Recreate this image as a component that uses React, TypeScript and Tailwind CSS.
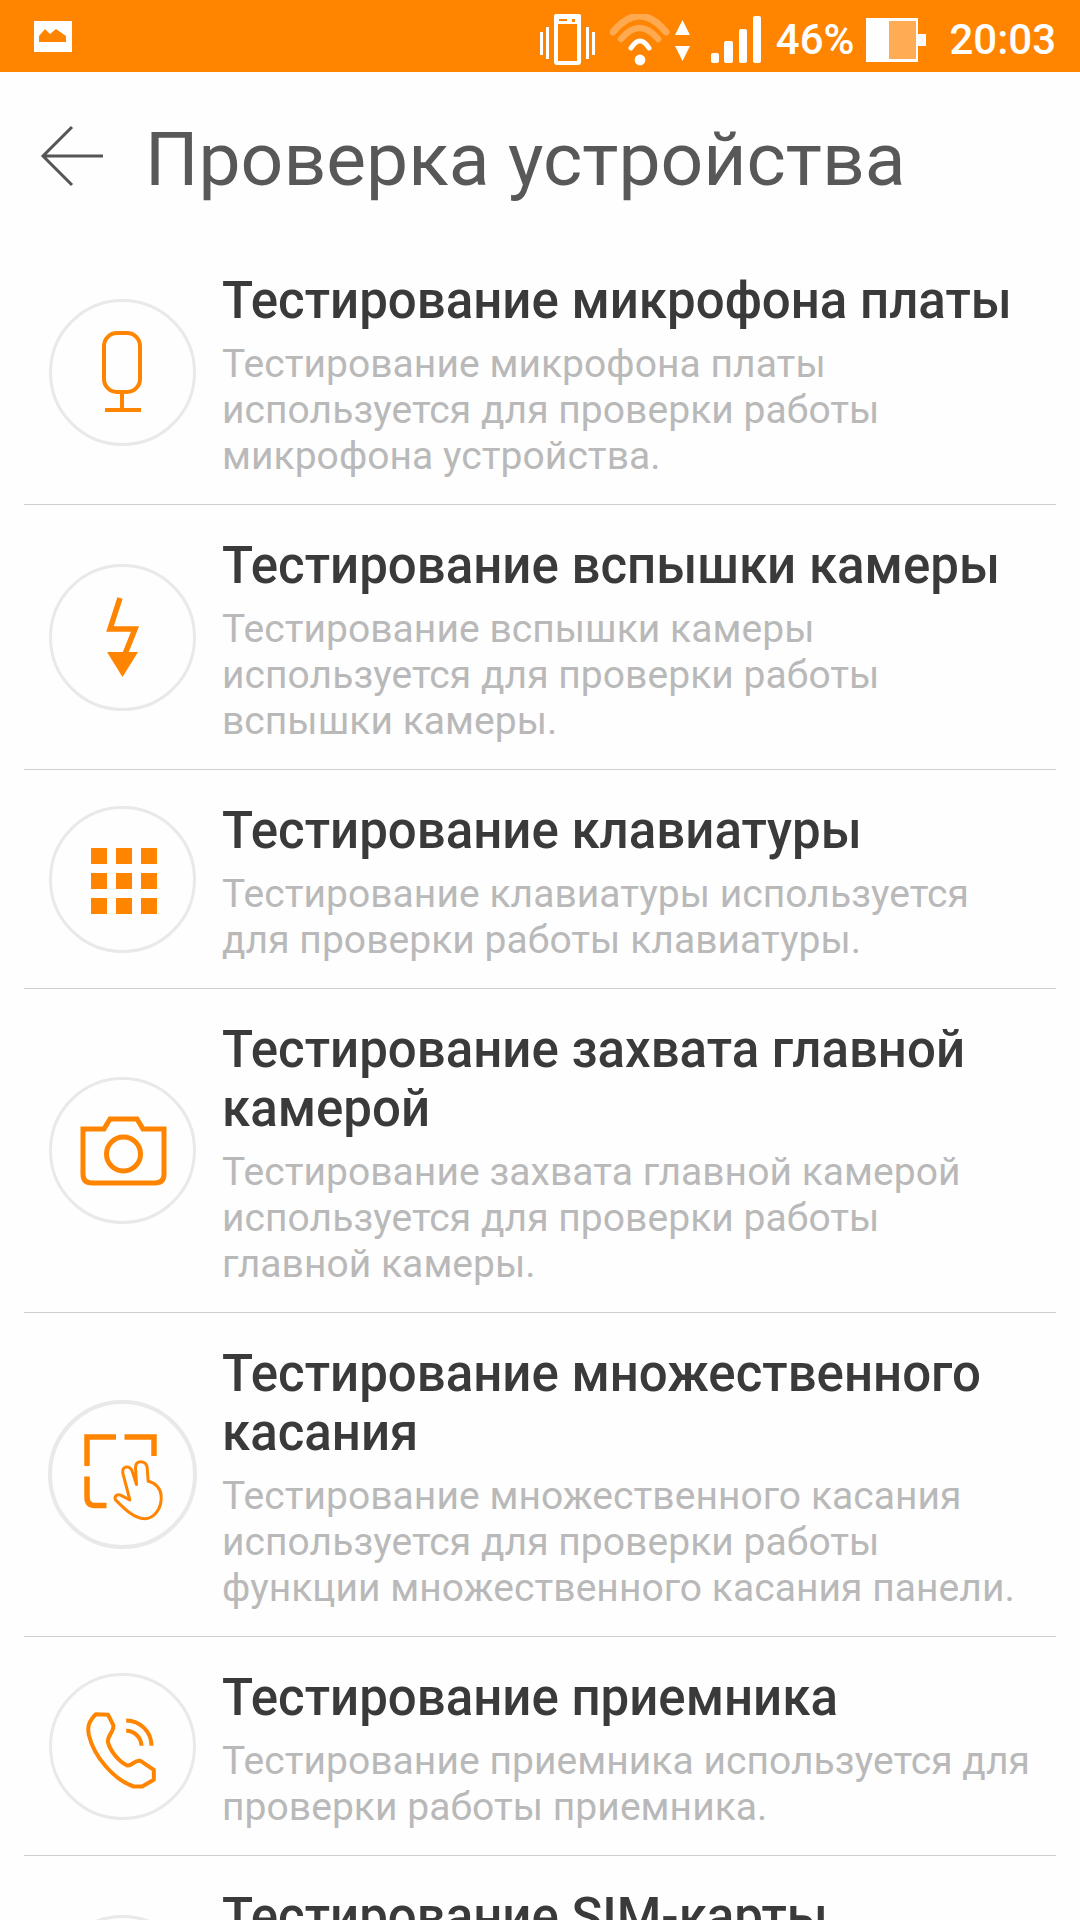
import React from "react";

const O = "#ff8400";

function Ic({ children, shift = false }: { children?: React.ReactNode; shift?: boolean }) {
  return (
    <svg width="147" height="147" viewBox={shift ? "-1 0 147 147" : "0 0 147 147"} fill="none" stroke={O} className="shrink-0">
      {children}
    </svg>
  );
}

const MicI = () => (
  <Ic shift>
    <rect x="54" y="34" width="36" height="59" rx="13" strokeWidth="4" />
    <path d="M72 93v18M55 111h36" strokeWidth="4" />
  </Ic>
);
const BoltI = () => (
  <Ic shift>
    <path d="M70 34L60 65H85L75 90" strokeWidth="5.5" />
    <path d="M57 88H88L72.5 113Z" fill={O} stroke="none" />
  </Ic>
);
const GridI = () => (
  <Ic shift>
    <g fill={O} stroke="none">
      {[41, 66, 91].map((x) =>
        [42, 67, 92].map((y) => <rect key={x + "-" + y} x={x} y={y} width="16" height="16" />)
      )}
    </g>
  </Ic>
);
const CamI = () => (
  <Ic shift>
    <path d="M33 52H54L60 42H87L93 52H114V97Q114 106 105 106H42Q33 106 33 97Z" strokeWidth="5" strokeLinejoin="miter" />
    <circle cx="73.5" cy="77" r="17" strokeWidth="5" />
  </Ic>
);
const TouchI = () => (
  <Ic>
    <path d="M67 36H38V65M75.5 36H105V55M38 75.5V96Q38 104.5 46 104.5H57.5" strokeWidth="5.5" />
    <g transform="translate(21.5 19.5) scale(0.3333)">
      <path
        d="M135 238C130 228 140 220 150 224L178 238L157 158C153 135 180 132 186 155L198 192L195 140C194 118 226 118 230 140L233 182C255 186 270 205 272 225C275 265 250 295 222 295C190 293 165 268 135 238Z"
        strokeWidth="9"
        strokeLinejoin="round"
      />
    </g>
  </Ic>
);
const PhoneI = () => (
  <Ic>
    <g transform="translate(21.5 18.5) scale(0.3333)">
      <path
        d="M76 68L113 70L128 100C134 118 112 128 112 150C118 178 145 210 170 222C185 225 190 205 210 208L250 235V265L215 285H190C130 265 70 195 55 130C50 105 55 90 76 68Z"
        strokeWidth="12"
        strokeLinejoin="round"
      />
      <path d="M167 87A76 76 0 0 1 243 163M167 118A46 46 0 0 1 213 163" strokeWidth="12" />
    </g>
  </Ic>
);

function Row({
  title,
  desc,
  icon,
  divider = true,
  thick = false,
}: {
  title: string[];
  desc: string[];
  icon: React.ReactNode;
  divider?: boolean;
  thick?: boolean;
}) {
  return (
    <div className={`mx-6 flex items-center ${divider ? "border-b border-[#d0d0d0]" : "min-h-[264px]"}`}>
      <div className="ml-[25px] w-[147px] flex justify-center shrink-0">
        <div
          className={`shrink-0 rounded-full flex items-center justify-center ${
            thick ? "w-[149px] h-[149px] border-[4px] border-[#e9e9e9]" : "w-[147px] h-[147px] border-[3px] border-[#e9e9e9]"
          }`}
        >
          {icon}
        </div>
      </div>
      <div className="ml-[26px] flex-1 whitespace-nowrap self-start pt-[31px] pb-[25px]">
        {title.map((t) => (
          <div key={t} className="text-[51px] leading-[59px] font-medium text-[#3a3a3a]">
            {t}
          </div>
        ))}
        <div className="h-[11px]" />
        {desc.map((t) => (
          <div key={t} className="text-[39px] leading-[46px] text-[#b9b9b9] tracking-[0.05px]">
            {t}
          </div>
        ))}
      </div>
    </div>
  );
}

export default function App() {
  return (
    <div className="w-[1080px] h-[1920px] overflow-hidden bg-[#fefefe] font-['Roboto',sans-serif]">
      <div className="h-[72px] bg-[#ff8400] flex items-center text-white">
        <svg width="40" height="32" viewBox="0 0 40 32" className="ml-[34px] shrink-0">
          <path d="M0 1H38V32H0Z" fill="#fff" />
          <path d="M5 22V16L11 9L16 14L22 9L32 16V22Z" fill="#ff8400" />
        </svg>
        <div className="ml-auto flex items-center pt-[8px]">
          <svg width="56" height="52" viewBox="0 0 56 52" className="shrink-0">
            <rect x="17" y="2" width="23" height="47" rx="1" fill="none" stroke="#fff" strokeWidth="4" />
            <rect x="15" y="0" width="27" height="10" rx="2" fill="#fff" />
            <rect x="20" y="5" width="8" height="2" fill="#ff8400" />
            <rect x="33" y="5" width="3" height="3" fill="#ff8400" />
            <path d="M1 18H4V41H1ZM7 13H10V45H7ZM47 13H50V45H47ZM53 18H56V41H53Z" fill="#fff" />
          </svg>
          <svg width="60" height="52" viewBox="0 0 60 52" fill="none" strokeLinecap="round" className="ml-[15px] shrink-0">
            <path d="M3 18Q29.5 -14 56 18" stroke="#ffa950" strokeWidth="7" />
            <path d="M11 25Q29.5 3 48 25" stroke="#ffa950" strokeWidth="6.5" />
            <path d="M21 34Q30 20 39 34" stroke="#fff" strokeWidth="5" />
            <circle cx="30" cy="46" r="5.4" fill="#fff" />
          </svg>
          <svg width="17" height="41" viewBox="0 0 17 41" className="ml-[4px] shrink-0">
            <path d="M8.5 0L16 15H1ZM1 26H16L8.5 41Z" fill="#fff" />
          </svg>
          <svg width="52" height="48" viewBox="0 0 52 48" className="ml-[19px] shrink-0" fill="#fff">
            <rect x="1" y="37" width="8" height="10" rx="2" />
            <rect x="14" y="25" width="9" height="22" rx="2" />
            <rect x="29" y="13" width="8" height="34" rx="2" />
            <rect x="43" y="0" width="8" height="47" rx="2" />
          </svg>
          <span className="ml-[14px] text-[42px] leading-none font-medium">46%</span>
          <div className="ml-[12px] flex items-center shrink-0">
            <div className="w-[52px] h-[44px] bg-white flex justify-end py-[3px] pr-[2px]">
              <div className="w-[27px] bg-[#ffac55]" />
            </div>
            <div className="w-[8px] h-[12px] bg-white" />
          </div>
          <span className="ml-[23px] mr-[24px] text-[42px] leading-none font-medium">20:03</span>
        </div>
      </div>
      <div className="h-[168px] flex items-start">
        <svg width="66" height="64" viewBox="0 0 66 64" fill="none" stroke="#555" strokeWidth="3" className="ml-[40px] mt-[53px] shrink-0">
          <path d="M32 2L3 31L32 60M3 31H63" />
        </svg>
        <div className="ml-[39px] mt-[45px] text-[75px] leading-[84px] text-[#585858] whitespace-nowrap">
          Проверка устройства
        </div>
      </div>
      <Row
        title={["Тестирование микрофона платы"]}
        desc={["Тестирование микрофона платы", "используется для проверки работы", "микрофона устройства."]}
        icon={<MicI />}
      />
      <Row
        title={["Тестирование вспышки камеры"]}
        desc={["Тестирование вспышки камеры", "используется для проверки работы", "вспышки камеры."]}
        icon={<BoltI />}
      />
      <Row
        title={["Тестирование клавиатуры"]}
        desc={["Тестирование клавиатуры используется", "для проверки работы клавиатуры."]}
        icon={<GridI />}
      />
      <Row
        title={["Тестирование захвата главной", "камерой"]}
        desc={["Тестирование захвата главной камерой", "используется для проверки работы", "главной камеры."]}
        icon={<CamI />}
      />
      <Row
        thick
        title={["Тестирование множественного", "касания"]}
        desc={["Тестирование множественного касания", "используется для проверки работы", "функции множественного касания панели."]}
        icon={<TouchI />}
      />
      <Row
        title={["Тестирование приемника"]}
        desc={["Тестирование приемника используется для", "проверки работы приемника."]}
        icon={<PhoneI />}
      />
      <Row title={["Тестирование SIM-карты"]} desc={[]} icon={<Ic />} divider={false} />
    </div>
  );
}
